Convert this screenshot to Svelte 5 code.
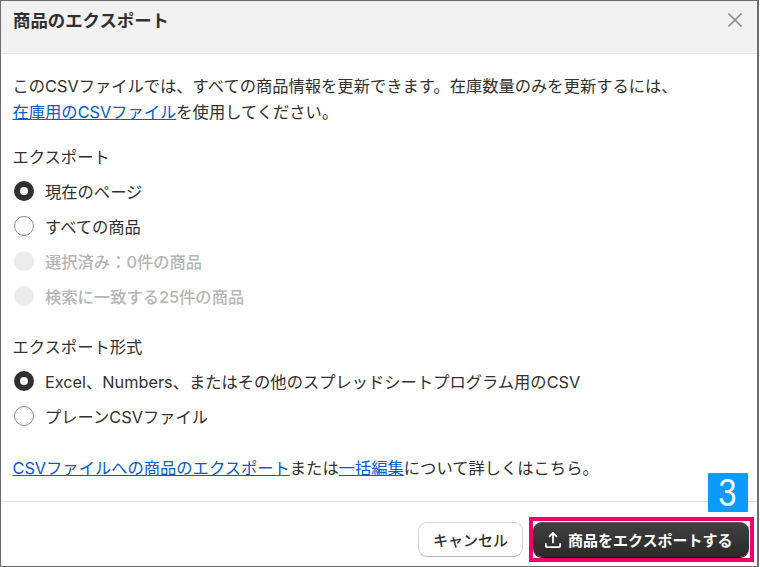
<script lang="ts">
  let scope = $state('current');
  let format = $state('excel');

  const scopes = [
    { id: 'current', label: '現在のページ' },
    { id: 'all', label: 'すべての商品' },
    { id: 'selected', label: '選択済み：0件の商品', disabled: true },
    { id: 'search', label: '検索に一致する25件の商品', disabled: true }
  ];

  const formats = [
    { id: 'excel', label: 'Excel、Numbers、またはその他のスプレッドシートプログラム用のCSV' },
    { id: 'plain', label: 'プレーンCSVファイル' }
  ];
</script>

{#snippet radio(name, item, current, pick)}
  <label class="option" class:disabled={item.disabled}>
    <input type="radio" {name} checked={current === item.id} disabled={item.disabled} onchange={() => pick(item.id)} />
    <span>{item.label}</span>
  </label>
{/snippet}

<div class="modal">
  <header>
    <h2>商品のエクスポート</h2>
    <button class="close" aria-label="閉じる">
      <svg viewBox="0 0 16 16" width="16" height="16"><path d="M1.5 1.5l13 13M14.5 1.5l-13 13" /></svg>
    </button>
  </header>

  <main>
    <p class="intro">このCSVファイルでは、すべての商品情報を更新できます。在庫数量のみを更新するには、<br /><a href="#inventory">在庫用のCSVファイル</a>を使用してください。</p>

    <section class="first">
      <div class="title">エクスポート</div>
      {#each scopes as item}
        {@render radio('scope', item, scope, (v) => (scope = v))}
      {/each}
    </section>

    <section>
      <div class="title">エクスポート形式</div>
      {#each formats as item}
        {@render radio('format', item, format, (v) => (format = v))}
      {/each}
    </section>

    <p class="help"><a href="#help">CSVファイルへの商品のエクスポート</a>または<a href="#bulk">一括編集</a>について詳しくはこちら。</p>
  </main>

  <footer>
    <button class="cancel">キャンセル</button>
    <div class="highlight">
      <span class="step"><span>3</span></span>
      <button class="primary">
        <svg viewBox="0.7 1.2 14.6 14.6" width="16" height="16"><path d="M8 11.5V2.2M4.4 5.6L8 2l3.6 3.6M1.5 11.5v2.5a1 1 0 0 0 1 1h11a1 1 0 0 0 1-1v-2.5" /></svg>
        商品をエクスポートする
      </button>
    </div>
  </footer>
</div>

<style>
  :global(body) {
    margin: 0;
    background: #fff;
  }

  .modal {
    width: 759px;
    height: 567px;
    box-sizing: border-box;
    display: flex;
    flex-direction: column;
    border: 1px solid #6d6d6d;
    border-width: 1px 2px 1px 1px;
    font-family: Inter, "Noto Sans CJK JP", sans-serif;
    font-size: 16.3px;
    color: #303030;
    background: #fff;
  }

  header {
    height: 53px;
    box-sizing: border-box;
    flex: none;
    display: flex;
    justify-content: space-between;
    padding: 10px 14px 0 12px;
    background: #f2f2f2;
    border-bottom: 1px solid #e3e3e3;
  }

  h2 {
    margin: 0;
    font-size: 17.4px;
    line-height: 20px;
    font-weight: 700;
  }

  .close {
    border: 0;
    padding: 0;
    height: 18px;
    margin-top: 1px;
    background: none;
  }

  .close svg path {
    fill: none;
    stroke: #8a8a8a;
    stroke-width: 1.6;
  }

  main {
    flex: 1;
    padding: 19px 12px 0 11.5px;
  }

  p {
    margin: 0;
    line-height: 26px;
  }

  a {
    color: #005bd3;
    text-decoration: underline;
  }

  section {
    margin-top: 21px;
  }

  section.first {
    margin-top: 19px;
  }

  .title {
    line-height: 26px;
    margin-bottom: 3px;
  }

  .option {
    display: flex;
    align-items: center;
    gap: 11px;
    height: 35px;
    padding-left: 1.5px;
  }

  .option input {
    appearance: none;
    width: 20px;
    height: 20px;
    margin: 0;
    box-sizing: border-box;
    border: 1px solid #8a8a8a;
    border-radius: 50%;
    background: #fff;
  }

  .option input:checked {
    border: 6.5px solid #303030;
  }

  .option.disabled {
    color: #b5b5b5;
    font-weight: 500;
  }

  .option input:disabled {
    border: 0;
    background: #ebebeb;
  }

  .help {
    margin-top: 22px;
  }

  footer {
    height: 65px;
    box-sizing: border-box;
    flex: none;
    display: flex;
    justify-content: flex-end;
    align-items: flex-start;
    gap: 6px;
    padding: 15px 3px 0 0;
    border-top: 1px solid #e3e3e3;
  }

  button {
    font: inherit;
  }

  .cancel {
    height: 35px;
    width: 105px;
    margin-top: 5px;
    padding: 0;
    border: 1px solid #d4d4d4;
    border-bottom-color: #b5b5b5;
    border-radius: 9px;
    background: #fff;
    color: #303030;
    font-size: 15px;
    font-weight: 500;
  }

  .highlight {
    position: relative;
    padding: 1px 1px 1px 0;
    border: 4px solid #f5006a;
  }

  .step {
    position: absolute;
    right: 2px;
    top: -48px;
    width: 40px;
    height: 39px;
    display: flex;
    align-items: center;
    justify-content: center;
    border-radius: 1px;
    background: #0a9bff;
    color: #fff;
    font-family: "Liberation Sans", sans-serif;
    font-size: 38px;
    line-height: 1;
  }

  .step span {
    transform: scaleX(0.85);
  }

  .primary {
    display: flex;
    align-items: center;
    gap: 7px;
    width: 216px;
    height: 35px;
    padding: 0 0 0 12px;
    border: 0;
    border-radius: 9px;
    background: linear-gradient(#404040, #2a2a2a);
    box-shadow: inset 0 1px 0 #5c5c5c, 0 1px 0 #111;
    color: #fff;
    font-size: 15px;
    font-weight: 700;
    white-space: nowrap;
  }

  .primary svg path {
    fill: none;
    stroke: #fff;
    stroke-width: 1.6;
  }
</style>
